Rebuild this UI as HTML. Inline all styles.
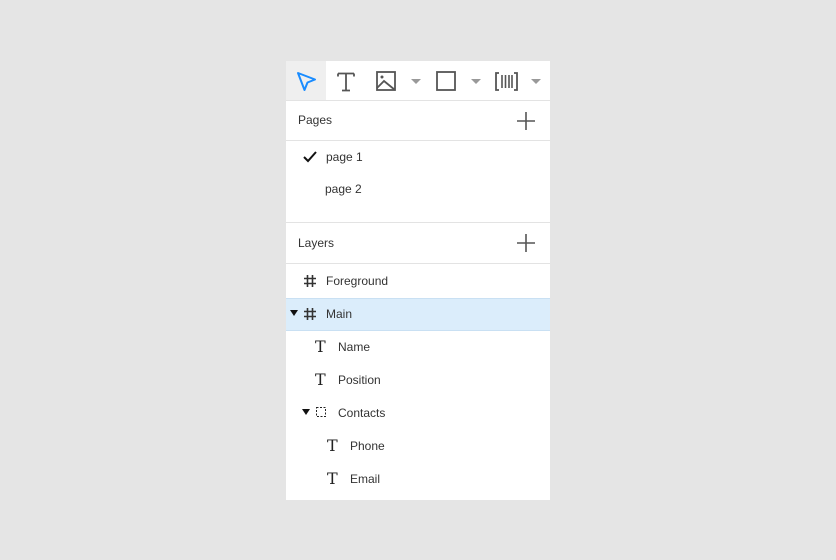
<!DOCTYPE html>
<html><head><style>
body{margin:0;width:836px;height:560px;background:#e5e5e5;font-family:"Liberation Sans",sans-serif;position:relative;overflow:hidden}
.p{position:absolute;left:286px;top:61px;width:264px;height:439px;background:#fff}
.a{position:absolute}
.t{position:absolute;font-size:12px;color:#333;line-height:14px}
.hl{position:absolute;left:0;width:264px;height:1px;background:#e3e3e3}
.T{position:absolute;font-family:"DejaVu Serif",serif;font-size:16px;color:#222;line-height:16px}
</style></head><body>
<div class="p">
<div class="a" style="left:0;top:0;width:40px;height:39px;background:#efefef"></div>
<svg class="a" style="left:0;top:0" width="264" height="40">
<path d="M12 12 L29 18.5 L21.5 21.5 L18.5 29 Z" fill="none" stroke="#1a8cff" stroke-width="2" stroke-linejoin="round"/>
<path d="M52 12.5h16M60 12.5v17M56 29.5h8M52 12.5v3M68 12.5v3" stroke="#555" stroke-width="1.8" fill="none"/>
<rect x="91" y="11" width="18" height="18" fill="none" stroke="#555" stroke-width="1.8"/>
<circle cx="96" cy="16" r="1.5" fill="#555"/>
<path d="M91 27 L98 20 L109 29" stroke="#555" stroke-width="1.8" fill="none"/>
<path d="M125 18h10l-5 5z" fill="#999"/>
<rect x="151" y="11" width="18" height="18" fill="none" stroke="#555" stroke-width="1.8"/>
<path d="M185 18h10l-5 5z" fill="#999"/>
<path d="M213 12h-3v17h3M228 12h3v17h-3" stroke="#555" stroke-width="1.8" fill="none"/>
<path d="M216 14v13M219.5 14v13M223 14v13M226 14v13" stroke="#555" stroke-width="1.6"/>
<path d="M245 18h10l-5 5z" fill="#999"/>
</svg>
<div class="hl" style="top:39px"></div>
<div class="t" style="left:12px;top:52px">Pages</div>
<svg class="a" style="left:230px;top:50px" width="20" height="20"><path d="M10 1v18M1 10h18" stroke="#555" stroke-width="1.6"/></svg>
<div class="hl" style="top:79px"></div>
<svg class="a" style="left:16px;top:89px" width="16" height="14"><path d="M2 7l4 4 8-9" stroke="#111" stroke-width="2" fill="none"/></svg>
<div class="t" style="left:40px;top:89px">page 1</div>
<div class="t" style="left:39px;top:121px">page 2</div>
<div class="hl" style="top:161px"></div>
<div class="t" style="left:12px;top:175px">Layers</div>
<svg class="a" style="left:230px;top:172px" width="20" height="20"><path d="M10 1v18M1 10h18" stroke="#555" stroke-width="1.6"/></svg>
<div class="hl" style="top:202px"></div>
<svg class="a" style="left:17px;top:213px" width="14" height="14"><path d="M4.5 1v12M9.5 1v12M1 4.5h12M1 9.5h12" stroke="#333" stroke-width="1.6"/></svg>
<div class="t" style="left:40px;top:213px">Foreground</div>
<div class="a" style="left:0;top:237px;width:264px;height:31px;background:#dbedfb;border-top:1px solid #c9e0f3;border-bottom:1px solid #c9e0f3"></div>
<svg class="a" style="left:4px;top:249px" width="8" height="6"><path d="M0 0h8l-4 6z" fill="#111"/></svg>
<svg class="a" style="left:17px;top:246px" width="14" height="14"><path d="M4.5 1v12M9.5 1v12M1 4.5h12M1 9.5h12" stroke="#333" stroke-width="1.6"/></svg>
<div class="t" style="left:40px;top:246px">Main</div>
<div class="T" style="left:29px;top:278px">T</div>
<div class="t" style="left:52px;top:279px">Name</div>
<div class="T" style="left:29px;top:311px">T</div>
<div class="t" style="left:52px;top:312px">Position</div>
<svg class="a" style="left:16px;top:348px" width="8" height="6"><path d="M0 0h8l-4 6z" fill="#111"/></svg>
<svg class="a" style="left:30px;top:346px" width="11" height="11"><rect x="0.5" y="0.5" width="9" height="9" fill="none" stroke="#222" stroke-width="1" stroke-dasharray="2 1.5"/></svg>
<div class="t" style="left:52px;top:345px">Contacts</div>
<div class="T" style="left:41px;top:377px">T</div>
<div class="t" style="left:64px;top:378px">Phone</div>
<div class="T" style="left:41px;top:410px">T</div>
<div class="t" style="left:64px;top:411px">Email</div>
</div>
</body></html>
